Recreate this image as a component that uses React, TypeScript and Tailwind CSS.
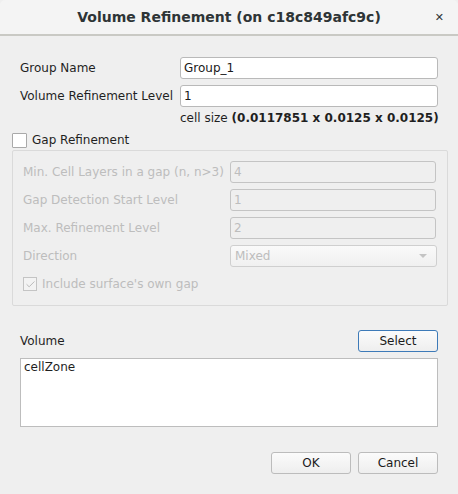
import { Check } from "lucide-react";

const font = { fontFamily: '"DejaVu Sans", sans-serif' };

function Field({ value, disabled }: { value: string; disabled?: boolean }) {
  return (
    <div
      className={`h-[22px] flex-1 rounded-[3px] border px-[3px] flex items-center text-[12px] ${
        disabled
          ? "border-[#c4c4c4] bg-[#efefef] text-[#bdbdbd]"
          : "border-[#b9b9b9] bg-white text-[#1a1a1a]"
      }`}
    >
      {value}
    </div>
  );
}

function Button({ label, focused }: { label: string; focused?: boolean }) {
  return (
    <div
      className={`h-[22px] w-[80px] rounded-[3px] border flex items-center justify-center text-[12px] text-[#1a1a1a] bg-gradient-to-b from-[#fbfbfb] to-[#eeeeee] ${
        focused ? "border-[#3d7ab8]" : "border-[#bcbcbc]"
      }`}
    >
      {label}
    </div>
  );
}

export default function App() {
  const gapRows = [
    { label: "Min. Cell Layers in a gap (n, n>3)", value: "4" },
    { label: "Gap Detection Start Level", value: "1" },
    { label: "Max. Refinement Level", value: "2" },
  ];

  return (
    <div style={font} className="w-[458px] h-[494px] bg-[#efefef] flex flex-col text-[#1f1f1f]">
      {/* Title bar */}
      <div className="h-[36px] shrink-0 rounded-t-[5px] bg-[#f4f4f4] border-b-2 border-[#c9c9c4] flex items-center relative">
        <div className="flex-1 text-center text-[14px] font-bold text-[#2e3436] pt-[1px]">
          Volume Refinement (on c18c849afc9c)
        </div>
        <div className="absolute right-[14px] top-[12px] text-[11px] font-bold text-[#2e3436] leading-none">✕</div>
      </div>

      <div className="flex flex-col px-[12px] pt-[21px]">
        {/* Group name */}
        <div className="flex items-center pl-[8px] pr-[8px] h-[22px]">
          <span className="w-[160px] text-[12px]">Group Name</span>
          <Field value="Group_1" />
        </div>
        <div className="flex items-center pl-[8px] pr-[8px] h-[22px] mt-[6px]">
          <span className="w-[160px] text-[12px]">Volume Refinement Level</span>
          <Field value="1" />
        </div>
        <div className="pl-[168px] mt-[3px] text-[12px] h-[16px] leading-[16px]">
          cell size <span className="font-bold">(0.0117851 x 0.0125 x 0.0125)</span>
        </div>

        {/* Gap refinement */}
        <div className="flex items-center mt-[6px] h-[16px]">
          <div className="w-[15px] h-[15px] border border-[#a9a9a9] bg-white rounded-[1px]" />
          <span className="ml-[5px] text-[12px]">Gap Refinement</span>
        </div>
        <div className="mt-[2px] h-[156px] w-[436px] border border-[#dadada] rounded-[2px] px-[10px] pt-[10px] flex flex-col gap-[6px] text-[#bdbdbd]">
          {gapRows.map((r) => (
            <div key={r.label} className="flex items-center h-[22px] pr-[1px]">
              <span className="w-[207px] text-[12px]">{r.label}</span>
              <Field value={r.value} disabled />
            </div>
          ))}
          <div className="flex items-center h-[22px]">
            <span className="w-[207px] text-[12px]">Direction</span>
            <div className="h-[22px] flex-1 rounded-[3px] border border-[#cfcfcf] bg-gradient-to-b from-[#fafafa] to-[#f0f0f0] px-[4px] flex items-center justify-between text-[12px]">
              <span>Mixed</span>
              <span className="w-0 h-0 border-l-[4px] border-r-[4px] border-t-[4px] border-l-transparent border-r-transparent border-t-[#c4c4c4] mr-[5px]" />
            </div>
          </div>
          <div className="flex items-center h-[16px] mt-[3px]">
            <div className="w-[14px] h-[14px] border border-[#c4c4c4] bg-[#f3f3f3] flex items-center justify-center">
              <Check className="w-[11px] h-[11px] text-[#b5b5b5]" strokeWidth={2} />
            </div>
            <span className="ml-[5px] text-[12px]">Include surface's own gap</span>
          </div>
        </div>

        {/* Volume */}
        <div className="flex items-center justify-between mt-[24px] pl-[8px] pr-[8px]">
          <span className="text-[12px]">Volume</span>
          <Button label="Select" focused />
        </div>
        <div className="mt-[6px] mx-[8px] h-[69px] border border-[#bdbdbd] bg-white px-[3px] text-[12px] leading-[16px]">
          cellZone
        </div>

        {/* Footer */}
        <div className="flex justify-end gap-[7px] mt-[25px] pr-[8px]">
          <Button label="OK" />
          <Button label="Cancel" />
        </div>
      </div>
    </div>
  );
}
